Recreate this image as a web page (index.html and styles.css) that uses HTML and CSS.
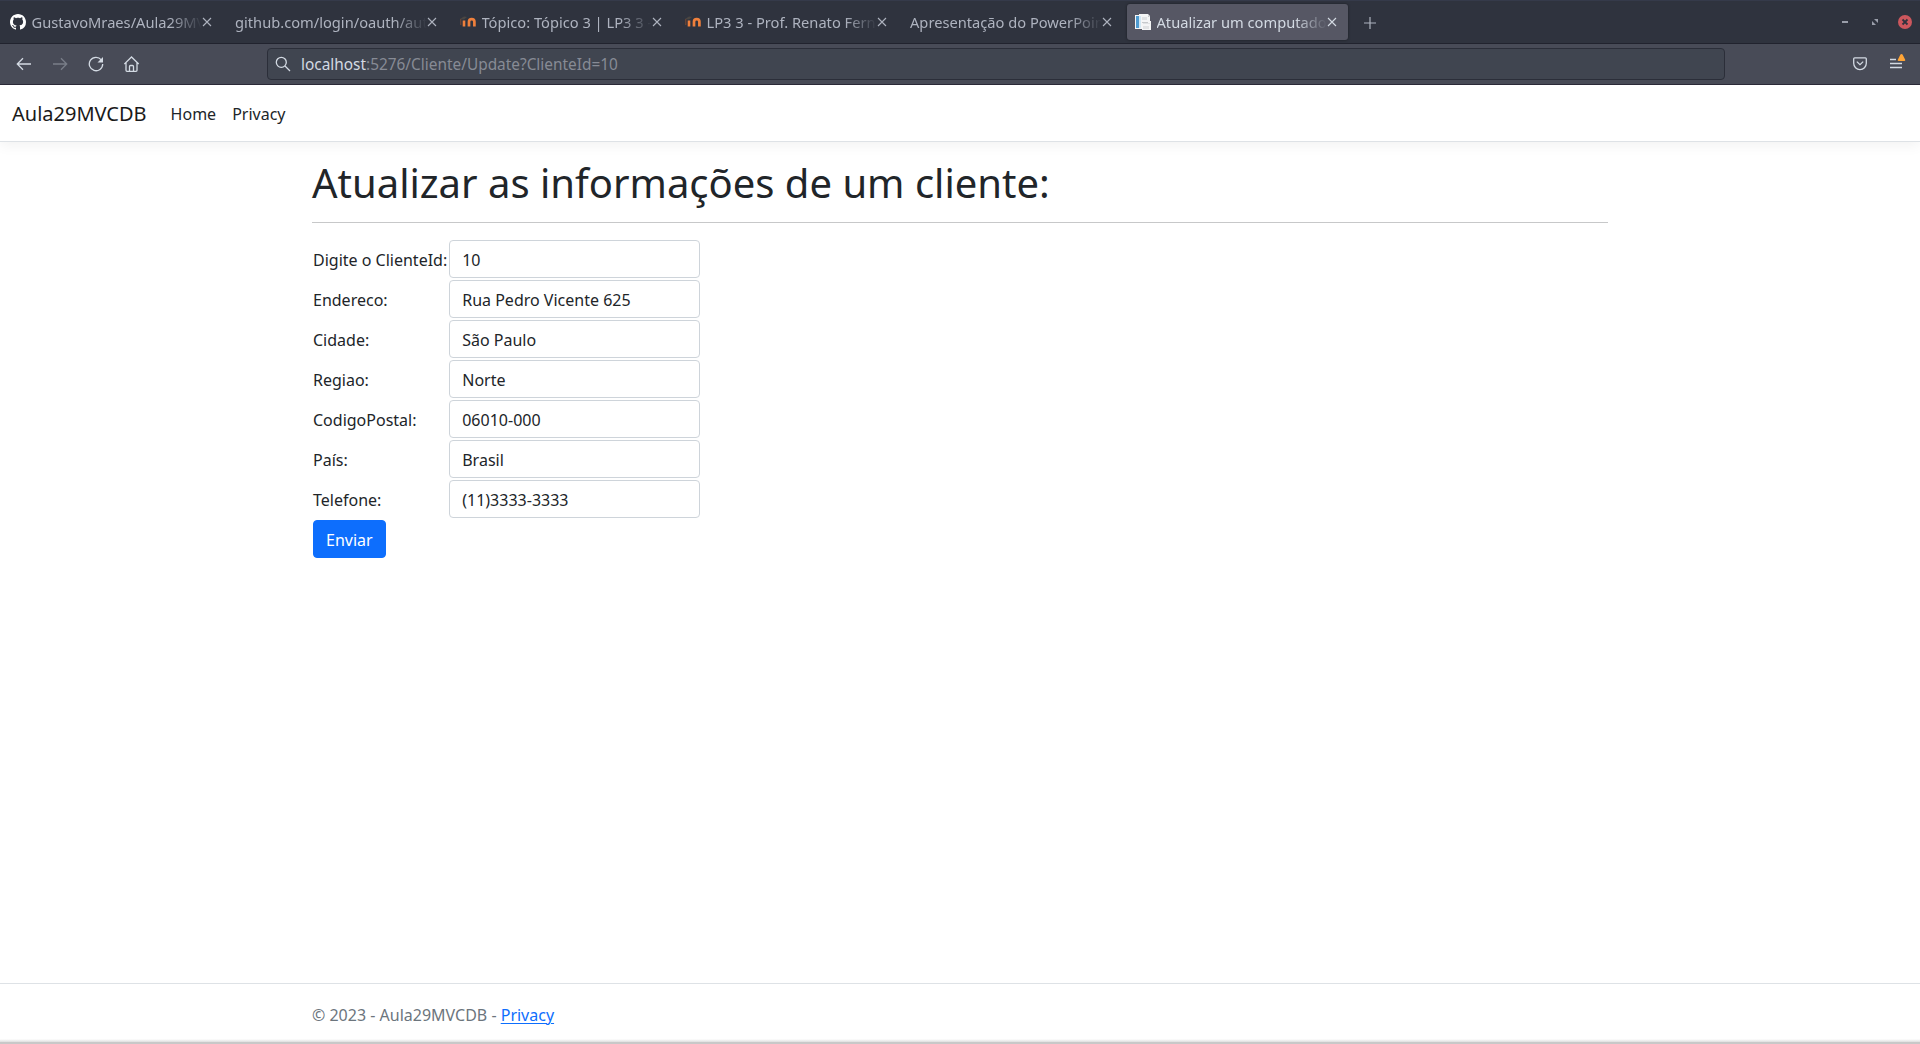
FILE: index.html
```html
<!DOCTYPE html>
<html lang="pt-BR">
<head>
<meta charset="utf-8">
<title>Atualizar um computador</title>
<link rel="stylesheet" href="styles.css">
</head>
<body>
<svg class="defs" width="0" height="0">
  <symbol id="close" viewBox="0 0 10 10"><path d="M1 1l8 8M9 1l-8 8" fill="none" stroke="currentColor" stroke-width="1.1"/></symbol>
  <symbol id="moodle" viewBox="0 0 16 16">
    <path d="M0 5l4-2.500 3 .5-3 2.500z" fill="#4a4643"/>
    <path d="M.8 5v6" stroke="#7b4a34" stroke-width="1"/>
    <path d="M4 12.500V6.500" stroke="#f0803c" stroke-width="2.600"/>
    <path d="M9 12.500V7.800a2.700 2.700 0 0 1 5.400 0v4.700" fill="none" stroke="#f0803c" stroke-width="2.700"/>
  </symbol>
</svg>
<div class="browser">
  <header class="tabbar">
    <div class="tab">
      <svg class="favicon" viewBox="0 0 16 16"><path fill="#fff" d="M8 0C3.580 0 0 3.580 0 8c0 3.540 2.290 6.530 5.470 7.590.4.070.55-.17.55-.38 0-.19-.01-.82-.01-1.490-2.010.37-2.530-.49-2.690-.94-.09-.23-.48-.94-.82-1.130-.28-.15-.68-.52-.01-.53.63-.01 1.080.58 1.230.82.72 1.210 1.870.87 2.330.66.07-.52.28-.87.51-1.070-1.780-.2-3.640-.89-3.640-3.950 0-.87.31-1.590.82-2.150-.08-.2-.36-1.020.08-2.120 0 0 .67-.21 2.200.82.64-.18 1.320-.27 2-.27s1.360.09 2 .27c1.530-1.040 2.200-.82 2.200-.82.44 1.100.16 1.920.08 2.120.51.56.82 1.270.82 2.150 0 3.070-1.870 3.750-3.650 3.950.29.25.54.73.54 1.480 0 1.070-.01 1.930-.01 2.200 0 .21.15.46.55.38A8.010 8.010 0 0 0 16 8c0-4.420-3.580-8-8-8z"/></svg>
      <span class="tab-title">GustavoMraes/Aula29MV</span><svg class="tab-close"><use href="#close"/></svg>
    </div>
    <div class="tab"><span class="tab-title">github.com/login/oauth/aut</span><svg class="tab-close"><use href="#close"/></svg></div>
    <div class="tab"><svg class="favicon"><use href="#moodle"/></svg><span class="tab-title">Tópico: Tópico 3 | LP3 3 -</span><svg class="tab-close"><use href="#close"/></svg></div>
    <div class="tab"><svg class="favicon"><use href="#moodle"/></svg><span class="tab-title">LP3 3 - Prof. Renato Fern</span><svg class="tab-close"><use href="#close"/></svg></div>
    <div class="tab"><span class="tab-title">Apresentação do PowerPoin</span><svg class="tab-close"><use href="#close"/></svg></div>
    <div class="tab tab-active">
      <svg class="favicon" viewBox="0 0 16 16"><path fill="#f4f5f6" d="M0 1h4V0h9l2 2v5h1v9H7v-1H0z"/><path fill="#4f9bd0" d="M1 2h3v12H1z"/><path fill="#d2e7f3" d="M4 2h2v12H4z"/><path fill="#e0e2e4" d="M7 3h5v3H7zM8 9h7v1H8zM8 12h6v3H8z"/><path fill="#c6c9cc" d="M7 8h6v1H7zM13 1l2 2h-2z"/></svg>
      <span class="tab-title">Atualizar um computado</span><svg class="tab-close"><use href="#close"/></svg>
    </div>
    <svg class="new-tab" viewBox="0 0 12 12"><path d="M6 0v12M0 6h12" stroke="currentColor" stroke-width="1.200"/></svg>
    <div class="window-controls">
      <svg width="6" height="14" viewBox="0 0 6 14"><path fill="#9a9eaa" d="M0 6h6v2H0z"/></svg>
      <svg width="6" height="14" viewBox="0 0 6 14"><path fill="#9a9eaa" d="M2 4h4v4zM0 6l4 4H0z"/></svg>
      <svg width="14" height="14" viewBox="0 0 14 14"><circle cx="7" cy="7" r="7" fill="#cc575d"/><path d="M4.500 4.500l5 5M9.500 4.500l-5 5" stroke="#2f333e" stroke-width="1.800"/></svg>
    </div>
  </header>
  <div class="toolbar">
    <div class="nav-buttons">
      <svg viewBox="0 0 16 16"><path d="M15 8H1.500M7 2.300L1.300 8 7 13.700"/></svg>
      <svg class="disabled" viewBox="0 0 16 16"><path d="M1 8h13.500M9 2.300L14.700 8 9 13.700"/></svg>
      <svg viewBox="0 0 16 16"><path d="M13.300 3.900A6.700 6.700 0 1 0 14.700 8"/><path class="solid" d="M15 1v5.500H9.500z"/></svg>
      <svg viewBox="0 0 16 16"><path d="M.3 8l7.200-7 7.200 7M2 6.700v7.600q0 1 1 1h9q1 0 1-1V6.700M5.500 15v-4.500q0-1 1-1h2q1 0 1 1V15"/></svg>
    </div>
    <div class="urlbar">
      <svg viewBox="0 0 16 16"><circle cx="6.300" cy="6.300" r="5"/><path d="M10 10l5 5"/></svg>
      <span class="url"><span class="host">localhost</span>:5276/Cliente/Update?ClienteId=10</span>
    </div>
    <div class="toolbar-end">
      <svg width="14" height="14" viewBox="0 0 14 14"><path d="M1.700.8h10.600q1 0 1 1v4.500a6.300 6.300 0 0 1-12.600 0V1.800q0-1 1-1zM3.800 4.600L7 7.600l3.200-3"/></svg>
      <svg width="16" height="16" viewBox="0 0 16 16"><path d="M0 5.500h6M0 9.500h12M0 13.500h12"/><path fill="#ffa436" stroke="none" d="M11.500 0q.8 0 1.200.8l2.500 4.900q.4 1.300-.9 1.300H8.700Q7.400 7 7.800 5.700L10.300.8q.4-.8 1.200-.8z"/></svg>
    </div>
  </div>
</div>
<div class="page">
  <nav class="navbar">
    <a class="brand">Aula29MVCDB</a>
    <a class="nav-link">Home</a>
    <a class="nav-link">Privacy</a>
  </nav>
  <main class="container">
    <h1>Atualizar as informações de um cliente:</h1>
    <hr>
    <form>
      <table>
        <tr><td class="label">Digite o ClienteId:</td><td><input class="form-control" value="10"></td></tr>
        <tr><td class="label">Endereco:</td><td><input class="form-control" value="Rua Pedro Vicente 625"></td></tr>
        <tr><td class="label">Cidade:</td><td><input class="form-control" value="São Paulo"></td></tr>
        <tr><td class="label">Regiao:</td><td><input class="form-control" value="Norte"></td></tr>
        <tr><td class="label">CodigoPostal:</td><td><input class="form-control" value="06010-000"></td></tr>
        <tr><td class="label">País:</td><td><input class="form-control" value="Brasil"></td></tr>
        <tr><td class="label">Telefone:</td><td><input class="form-control" value="(11)3333-3333"></td></tr>
        <tr><td><button class="btn" type="button">Enviar</button></td><td></td></tr>
      </table>
    </form>
  </main>
  <footer class="footer">
    <div class="container">© 2023 - Aula29MVCDB - <a class="link">Privacy</a></div>
  </footer>
</div>
</body>
</html>
```
FILE: styles.css
```css
*, *::before, *::after { box-sizing: border-box; }
body {
  margin: 0;
  height: 1044px;
  display: flex;
  flex-direction: column;
  overflow: hidden;
  font: 16px/1.5 "Noto Sans", sans-serif;
  color: #212529;
  background: #fff;
}
svg { flex: none; display: block; }
.defs { position: absolute; }

/* Browser chrome */
.browser { flex: none; height: 85px; }
.tabbar {
  height: 44px;
  display: flex;
  align-items: center;
  background: #2f333e;
  border-top: 1px solid #353a4a;
  border-bottom: 1px solid #21232e;
  color: #aeb3bf;
  font-size: 14.667px;
}
.tab {
  width: 221px;
  height: 36px;
  margin: 0 2px;
  padding: 0 11px 0 8px;
  display: flex;
  align-items: center;
  border-radius: 3px;
}
.tab-active {
  background: #565764;
  color: #d3dae3;
  box-shadow: 0 0 3px rgba(0, 0, 0, .45);
}
.favicon { width: 16px; height: 16px; margin-right: 5.5px; }
.tab-title {
  flex: 1;
  min-width: 0;
  overflow: hidden;
  white-space: nowrap;
  -webkit-mask-image: linear-gradient(to left, transparent, #000 32px);
  mask-image: linear-gradient(to left, transparent, #000 32px);
}
.tab-close { width: 10px; height: 10px; }
.new-tab { width: 12px; height: 12px; margin: 1px 0 0 14px; }
.window-controls {
  margin-left: auto;
  padding-right: 8px;
  display: flex;
  align-items: center;
}
.window-controls svg:nth-child(2) { margin: 0 20px 0 24px; }
.toolbar {
  height: 41px;
  display: flex;
  align-items: center;
  background: #484b57;
  border-bottom: 1px solid #2b2a38;
}
.toolbar svg { fill: none; stroke: #d3dae3; stroke-width: 1.3; }
.nav-buttons { display: flex; gap: 20px; width: 267px; padding-left: 16px; }
.nav-buttons svg { width: 16px; height: 16px; }
.nav-buttons .disabled { opacity: .35; }
.nav-buttons .solid { fill: #d3dae3; stroke: none; }
.urlbar {
  width: 1458px;
  height: 32px;
  padding-left: 7px;
  display: flex;
  align-items: center;
  gap: 10px;
  background: #404550;
  border: 1px solid #2b2e39;
  border-radius: 4px;
}
.urlbar svg { width: 16px; height: 16px; }
.url { padding-top: 2px; color: #878b95; font-size: 15.4px; }
.host { color: #d3dae3; }
.toolbar-end {
  margin-left: auto;
  padding-right: 14px;
  display: flex;
  align-items: center;
  gap: 23px;
}
.toolbar-end svg:last-child { margin-top: -5px; }

/* Web page */
.page {
  flex: 1;
  display: flex;
  flex-direction: column;
}
.navbar {
  height: 57px;
  margin-bottom: 16px;
  padding: 9px 12px 7px;
  display: flex;
  align-items: center;
  border-bottom: 1px solid #dee2e6;
  box-shadow: 0 4px 12px rgba(0, 0, 0, .05);
}
.brand { margin-right: 16px; font-size: 20px; color: #1a1a1a; }
.nav-link { padding: 8px; }
.container { width: 1320px; margin: 0 auto; padding: 0 12px; }
h1 { margin: 0 0 8px; height: 48px; font-size: 40px; font-weight: 400; line-height: 50px; }
hr { margin: 16px 0; height: 1px; border: 0; background: #c7c8c9; }
table { border-collapse: collapse; }
td { padding: 1px; }
.label { padding-top: 3px; }
.form-control {
  display: block;
  width: 251px;
  height: 38px;
  padding: 7px 12px 5px;
  font: inherit;
  color: inherit;
  background: #fff;
  border: 1px solid #ced4da;
  border-radius: 4px;
}
.btn {
  display: block;
  height: 38px;
  padding: 7px 12px 5px;
  font: inherit;
  color: #fff;
  background: #0d6efd;
  border: 1px solid #0d6efd;
  border-radius: 4px;
}
.footer {
  margin-top: auto;
  height: 61px;
  border-top: 1px solid #dee2e6;
  line-height: 62px;
  color: #6c757d;
  background: linear-gradient(to top, #c8c8c8 2px, #dedede 2px, #fff 5px);
}
.link { color: #0d6efd; text-decoration: underline 1px; text-underline-offset: 2px; }
```
